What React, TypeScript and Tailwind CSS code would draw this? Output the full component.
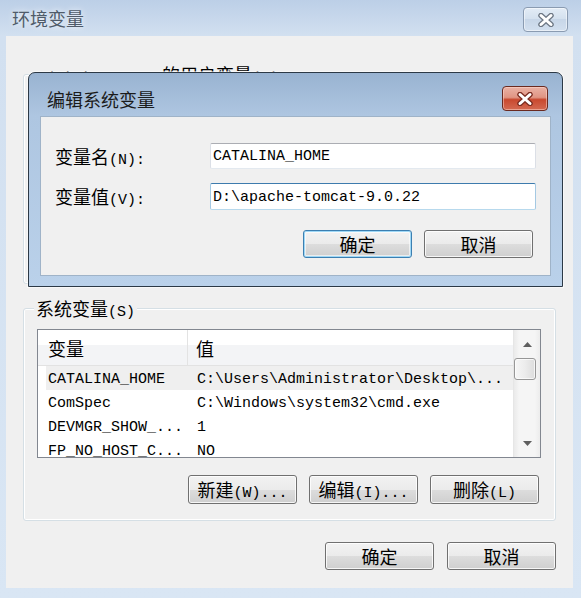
import { FC, ReactNode } from "react";

const zh = "font-['Noto_Sans_CJK_SC',sans-serif] text-[18px] leading-[20px]";
const en = "font-['Liberation_Mono','Noto_Sans_CJK_SC',monospace] text-[15px] leading-[20px]";

const Zh: FC<{ children: ReactNode }> = ({ children }) => <span className={zh}>{children}</span>;
// inline latin inside a Chinese label: short leading so it does not grow the line box
const En: FC<{ children: ReactNode }> = ({ children }) => (
  <span className="font-['Liberation_Mono','Noto_Sans_CJK_SC',monospace] text-[15px] leading-[12px]">{children}</span>
);

const CloseX: FC<{ outline: string }> = ({ outline }) => (
  <svg width="18" height="14" viewBox="0 0 18 14">
    <path d="M4 2.5 L14 11.5 M14 2.5 L4 11.5" stroke={outline} strokeWidth="5.5" strokeLinecap="round" />
    <path d="M4 2.5 L14 11.5 M14 2.5 L4 11.5" stroke="#ffffff" strokeWidth="3" strokeLinecap="round" />
  </svg>
);

interface BtnProps {
  children: ReactNode;
  focused?: boolean;
  tall?: boolean;
}

const Btn: FC<BtnProps> = ({ children, focused, tall }) => {
  const border = focused
    ? "border-[#3c7fb1] shadow-[inset_0_0_0_1px_#9fd8f6,inset_0_0_0_2px_rgba(255,255,255,0.6)]"
    : "border-[#707070] shadow-[inset_0_0_0_1px_rgba(255,255,255,0.8)]";
  return (
    <button
      className={`${tall ? "h-[29px]" : "h-[28px]"} w-[109px] rounded-[3px] border ${border} bg-[linear-gradient(#f2f2f2_0%,#ebebeb_50%,#dddddd_50%,#cfcfcf_100%)] flex items-center justify-center text-black whitespace-nowrap`}
    >
      <span>{children}</span>
    </button>
  );
};

const rows = [
  ["CATALINA_HOME", "C:\\Users\\Administrator\\Desktop\\..."],
  ["ComSpec", "C:\\Windows\\system32\\cmd.exe"],
  ["DEVMGR_SHOW_...", "1"],
  ["FP_NO_HOST_C...", "NO"],
];

const Arrow: FC<{ up?: boolean }> = ({ up }) => (
  <svg width="9" height="5" viewBox="0 0 9 5">
    <path d={up ? "M0 5 L4.5 0 L9 5 Z" : "M0 0 L4.5 5 L9 0 Z"} fill="#5f5f5f" />
  </svg>
);

const EditDialog: FC = () => (
  <div className="absolute left-[28px] top-[72px] w-[535px] h-[215px] rounded-t-[7px] border border-[#2c3946] bg-[linear-gradient(#99b3d1_0px,#aec6e1_43px,#bad1ea_100%)] shadow-[0_0_0_1px_rgba(255,255,255,0.55)] flex flex-col">
    <div className="h-[43px] flex items-start pl-[18px] pr-[14px]">
      <div className="mt-[16px] text-[#1b1b1b]">编辑系统变量</div>
      <div className="ml-auto mt-[13px] w-[46px] h-[25px] rounded-[4px] border border-[#6a2a20] bg-[linear-gradient(#eab2a5_0%,#e09583_45%,#c9492f_55%,#d46a52_100%)] shadow-[inset_0_0_0_1px_rgba(255,220,210,0.5)] flex items-center justify-center">
        <CloseX outline="#7a2c20" />
      </div>
    </div>
    <div className="mx-[11px] mb-[10px] flex-1 bg-[#f0f0f0] border border-[#9fb3c8] flex flex-col pt-[26px] pl-[14px] pr-[14px]">
      <div className="flex items-center">
        <div className="w-[155px] whitespace-nowrap">
          <Zh>变量名</Zh>
          <En>(N):</En>
        </div>
        <div className={`${en} flex-1 h-[26px] rounded-[2px] border border-[#dbdfe6] border-t-[#abadb3] border-b-[#e3e9ef] bg-white flex items-center pl-[2px] pt-[2px]`}>
          CATALINA_HOME
        </div>
      </div>
      <div className="flex items-center mt-[14px]">
        <div className="w-[155px] whitespace-nowrap">
          <Zh>变量值</Zh>
          <En>(V):</En>
        </div>
        <div className={`${en} flex-1 h-[27px] rounded-[2px] border border-[#a4c9e3] border-t-[#3d7bad] border-b-[#b7d9ed] bg-white flex items-center pl-[2px] pt-[2px]`}>
          D:\apache-tomcat-9.0.22
        </div>
      </div>
      <div className="mt-[20px] mr-[3px] flex justify-end gap-[12px]">
        <Btn focused>确定</Btn>
        <Btn>取消</Btn>
      </div>
    </div>
  </div>
);

const App: FC = () => {
  return (
    <div className={`${zh} relative w-[581px] h-[598px] overflow-hidden flex flex-col bg-[linear-gradient(#bccfe7_0px,#d2e0f0_36px,#d9e6f4_100%)] text-black select-none`}>
      {/* title bar */}
      <div className="h-[36px] flex items-start pl-[12px] pr-[13px]">
        <div className="mt-[8px] text-[#4f5b69] [text-shadow:0_0_6px_rgba(255,255,255,0.9)]">环境变量</div>
        <div className="ml-auto mt-[7px] w-[45px] h-[25px] rounded-[4px] border border-[#8a9bb1] bg-[linear-gradient(#e3ecf6_0%,#d3e0ee_50%,#c7d6e8_50%,#d3e0ef_100%)] shadow-[inset_0_0_0_1px_rgba(255,255,255,0.5)] flex items-center justify-center">
          <CloseX outline="#6d7784" />
        </div>
      </div>

      {/* client area */}
      <div className="ml-[6px] mr-[8px] h-[552px] bg-[#f0f0f0] flex flex-col">
        {/* user variables (covered by the edit dialog) */}
        <div className="mt-[38px] mx-[17px] h-[210px] rounded-[3px] border border-[#d5dfe5] shadow-[inset_0_0_0_1px_#ffffff]">
          <div className="-mt-[11px] ml-[10px] w-fit px-[2px] bg-[#f0f0f0] whitespace-nowrap">
            <En>Administrator </En>
            <Zh>的用户变量</Zh>
            <En>(U)</En>
          </div>
        </div>

        {/* system variables */}
        <div className="mt-[24px] mx-[17px] rounded-[3px] border border-[#d5dfe5] shadow-[inset_0_0_0_1px_#ffffff] flex flex-col pb-[16px]">
          <div className="-mt-[11px] ml-[10px] w-fit px-[2px] bg-[#f0f0f0] whitespace-nowrap">
            <Zh>系统变量</Zh>
            <En>(S)</En>
          </div>

          <div className="mt-[10px] ml-[13px] mr-[14px] h-[129px] border border-[#828790] bg-white flex">
            <div className="flex-1 flex flex-col overflow-hidden">
              <div className="h-[36px] shrink-0 flex border-b border-[#e2e2e2] bg-[linear-gradient(#ffffff_0%,#ffffff_42%,#f3f4f6_42%,#f3f4f6_100%)]">
                <div className="w-[150px] border-r border-[#e3e3e3] pl-[10px] flex items-center">变量</div>
                <div className="pl-[8px] flex items-center">值</div>
              </div>
              <div className="flex flex-col pl-[8px]">
                {rows.map(([name, value], i) => (
                  <div
                    key={name}
                    className={`${en} h-[24px] shrink-0 flex items-center pt-[4px] whitespace-nowrap ${i === 0 ? "bg-[#efefef]" : "bg-white"}`}
                  >
                    <div className="w-[151px] pl-[2px] overflow-hidden">{name}</div>
                    <div className="overflow-hidden">{value}</div>
                  </div>
                ))}
              </div>
            </div>
            <div className="w-[27px] shrink-0 flex flex-col bg-[linear-gradient(90deg,#eaeaea_0%,#f5f5f5_20%,#f5f5f5_80%,#ececec_100%)] border-l border-[#e6e6e6]">
              <div className="h-[28px] flex items-center justify-center pl-[1px]">
                <Arrow up />
              </div>
              <div className="h-[22px] w-[22px] rounded-[3px] border border-[#979797] bg-[linear-gradient(90deg,#f6f6f6_0%,#ececec_50%,#dcdcdc_100%)] shadow-[inset_0_0_0_1px_rgba(255,255,255,0.7)]" />
              <div className="flex-1" />
              <div className="h-[28px] flex items-center justify-center pl-[1px]">
                <Arrow />
              </div>
            </div>
          </div>

          <div className="mt-[17px] pr-[16px] flex justify-end gap-[12px]">
            <Btn tall>
              新建<En>(W)...</En>
            </Btn>
            <Btn tall>
              编辑<En>(I)...</En>
            </Btn>
            <Btn tall>
              删除<En>(L)</En>
            </Btn>
          </div>
        </div>

        {/* dialog buttons */}
        <div className="mt-[21px] pr-[17px] flex justify-end gap-[13px]">
          <Btn>确定</Btn>
          <Btn>取消</Btn>
        </div>
      </div>

      <EditDialog />
    </div>
  );
};

export default App;
